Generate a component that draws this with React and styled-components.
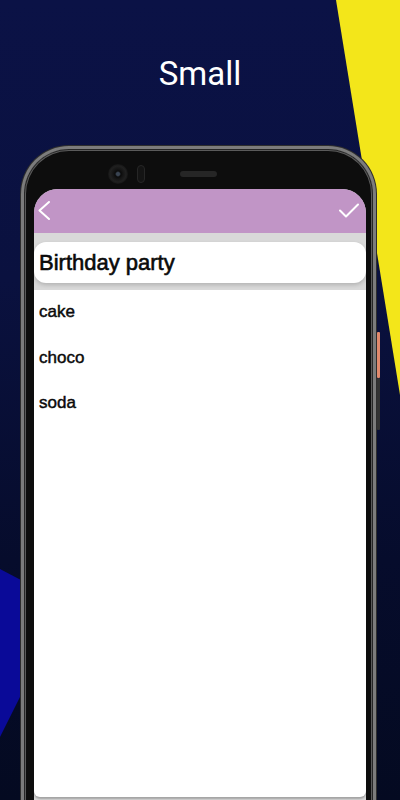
import React from "react";
import styled, { createGlobalStyle } from "styled-components";

const GlobalStyle = createGlobalStyle`
  html, body {
    margin: 0;
    padding: 0;
  }
  body {
    width: 400px;
    height: 800px;
    overflow: hidden;
    background: #0a1243;
    font-family: Roboto, "Liberation Sans", sans-serif;
  }
`;

const Page = styled.div`
  position: relative;
  width: 400px;
  height: 800px;
  overflow: hidden;
  display: flex;
  flex-direction: column;
  background: linear-gradient(180deg, #0b1246 0%, #0a113f 35%, #060c2c 70%, #040a21 100%);
`;

const Backdrop = styled.svg`
  position: absolute;
  left: 0;
  top: 0;
  width: 400px;
  height: 800px;
`;

const Title = styled.h1`
  position: relative;
  margin: 0;
  padding-top: 54px;
  height: 40px;
  line-height: 40px;
  text-align: center;
  color: #ffffff;
  font-family: Roboto, "Liberation Sans", sans-serif;
  font-size: 33px;
  font-weight: 400;
`;

const Phone = styled.div`
  position: relative;
  box-sizing: border-box;
  width: 355px;
  height: 680px;
  flex-shrink: 0;
  margin: 52px 0 0 21px;
  padding: 0 7px 0 10px;
  border: 3px solid #7c7c7c;
  border-bottom: none;
  border-radius: 48px 48px 0 0;
  background: #0d0d0d;
  box-shadow: 0 0 0 1px #2e2e2e, inset 0 0 0 1px #262626, inset 0 0 0 2px #5a5a5a;
`;

const SideButton = styled.div`
  position: absolute;
  right: -7px;
  top: ${p => p.$top}px;
  width: 3px;
  height: ${p => p.$height}px;
  border-radius: 1px;
  background: ${p => p.$color};
`;

const Bezel = styled.div`
  display: flex;
  align-items: center;
  height: 24px;
  padding: 13px 0 3px 74px;
`;

const Camera = styled.div`
  width: 20px;
  height: 20px;
  border-radius: 50%;
  background: radial-gradient(circle at 50% 50%, #3a4452 0 1.5px, #0b0b0b 3px, #151515 5px, #202020 8px, #151515 10px);
`;

const Sensor = styled.div`
  box-sizing: border-box;
  width: 8px;
  height: 18px;
  margin-left: 9px;
  border-radius: 4px;
  background: #141414;
  border: 1px solid #262626;
`;

const Speaker = styled.div`
  width: 37px;
  height: 6px;
  margin-left: 35px;
  border-radius: 3px;
  background: #262626;
`;

const Screen = styled.div`
  display: flex;
  flex-direction: column;
  height: 620px;
  border-radius: 24px 24px 0 0;
  overflow: hidden;
  background: #d9d9d9;
`;

const Header = styled.div`
  display: flex;
  justify-content: space-between;
  align-items: center;
  height: 44px;
  padding: 0 7px 0 4px;
  background: #c195c6;
`;

const TitleCard = styled.div`
  display: flex;
  align-items: center;
  height: 41px;
  margin-top: 9px;
  padding-left: 5px;
  border-radius: 12px;
  background: #ffffff;
  box-shadow: 0 2px 4px rgba(0, 0, 0, 0.18);
  font-family: "Liberation Sans", Arial, sans-serif;
  font-size: 22px;
  color: #0a0a0a;
  -webkit-text-stroke: 0.6px #0a0a0a;
`;

const ListCard = styled.div`
  display: flex;
  flex-direction: column;
  height: 507px;
  margin-top: 7px;
  border-radius: 0 0 6px 6px;
  background: #ffffff;
  box-shadow: 0 2px 2px rgba(0, 0, 0, 0.25);
`;

const Item = styled.div`
  height: 45.5px;
  line-height: 44px;
  padding-left: 5px;
  font-family: "Liberation Sans", Arial, sans-serif;
  font-size: 17px;
  color: #0a0a0a;
  -webkit-text-stroke: 0.45px #0a0a0a;
`;

const BackIcon = () => (
  <svg width="12" height="20" viewBox="0 0 12 20">
    <polyline points="11,1 1.5,9.5 11,18" fill="none" stroke="#ffffff" strokeWidth="2" strokeLinecap="round" strokeLinejoin="round" />
  </svg>
);

const CheckIcon = () => (
  <svg width="20" height="16" viewBox="0 0 20 16">
    <polyline points="1,7.5 7,13.5 19,1.5" fill="none" stroke="#ffffff" strokeWidth="2" strokeLinecap="round" strokeLinejoin="round" />
  </svg>
);

const items = ["cake", "choco", "soda"];

export default function App() {
  return (
    <>
      <GlobalStyle />
      <Page>
        <Backdrop viewBox="0 0 400 800">
          <polygon points="336,0 400,0 400,395" fill="#f3e61a" />
          <polygon points="0,569 40,590 40,657 0,737" fill="#0a0a98" />
        </Backdrop>
        <Title>Small</Title>
        <Phone>
          <SideButton $top={183} $height={46} $color="#e0896c" />
          <SideButton $top={229} $height={52} $color="#333333" />
          <Bezel>
            <Camera />
            <Sensor />
            <Speaker />
          </Bezel>
          <Screen>
            <Header>
              <BackIcon />
              <CheckIcon />
            </Header>
            <TitleCard>Birthday party</TitleCard>
            <ListCard>
              {items.map(item => (
                <Item key={item}>{item}</Item>
              ))}
            </ListCard>
          </Screen>
        </Phone>
      </Page>
    </>
  );
}
